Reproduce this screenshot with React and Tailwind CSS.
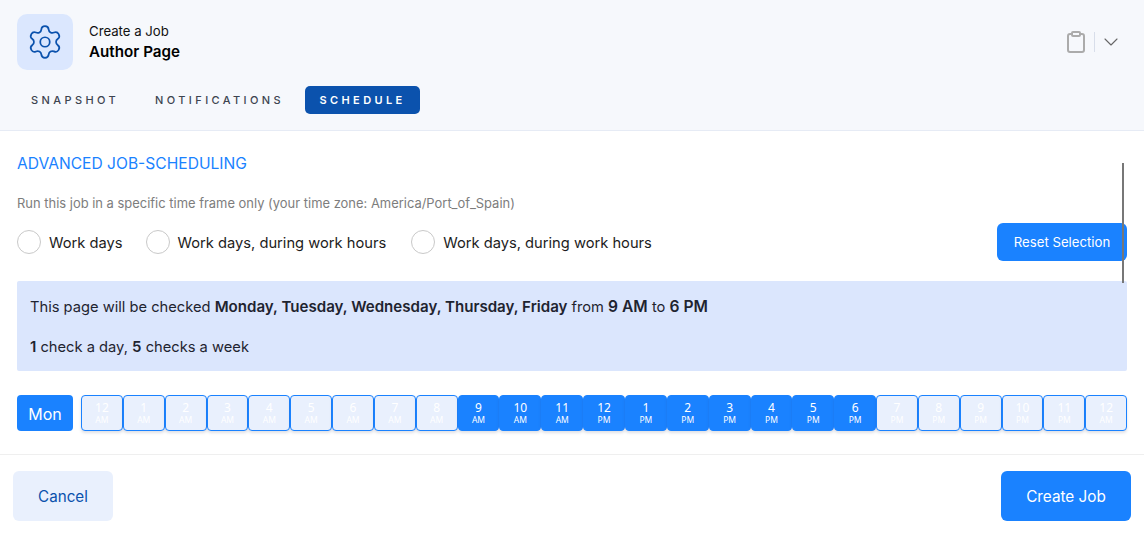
import React from 'react';
import { ChevronDown, Clipboard, Settings } from 'lucide-react';

const horas = [
    ['12', 'AM', false], ['1', 'AM', false], ['2', 'AM', false], ['3', 'AM', false], ['4', 'AM', false],
    ['5', 'AM', false], ['6', 'AM', false], ['7', 'AM', false], ['8', 'AM', false],
    ['9', 'AM', true], ['10', 'AM', true], ['11', 'AM', true], ['12', 'PM', true], ['1', 'PM', true],
    ['2', 'PM', true], ['3', 'PM', true], ['4', 'PM', true], ['5', 'PM', true], ['6', 'PM', true],
    ['7', 'PM', false], ['8', 'PM', false], ['9', 'PM', false], ['10', 'PM', false], ['11', 'PM', false],
    ['12', 'AM', false],
];

const Radio = ({ label, className }) => (
    <label className={`flex items-center gap-[8px] ${className}`}>
        <span className="w-[24px] h-[24px] rounded-full border border-[#c9c9c9] bg-white" />
        <span className="mt-[2px] text-[14.7px] text-[#1c1c1c]">{label}</span>
    </label>
);

const Hora = ({ hora, periodo, ativo }) => (
    <div
        className={`flex-1 h-[36px] flex flex-col items-center justify-center rounded-[4px] border border-[#1a82ff] text-white shadow-[0_2px_3px_rgba(60,70,100,0.16)] ${ativo ? 'bg-[#1a82ff]' : 'bg-[#e9f0fd]'}`}
    >
        <span className="text-[12px] leading-[13px] font-['Noto_Sans',sans-serif]">{hora}</span>
        <span className="text-[8.5px] leading-[11px] font-['Noto_Sans',sans-serif]">{periodo}</span>
    </div>
);

export default function App() {
    return (
        <div className="w-[1144px] h-[534px] overflow-hidden bg-white font-['Inter',sans-serif] flex flex-col">
            <header className="h-[131px] shrink-0 bg-[#f6f8fc] border-b border-[#e6ebf5] pl-[17px] pr-[21px] pt-[14px]">
                <div className="flex items-center">
                    <div className="w-[56px] h-[56px] rounded-[10px] bg-[#dbe7fe] flex items-center justify-center">
                        <Settings size={38} strokeWidth={1.1} className="text-[#0b52ad]" />
                    </div>
                    <div className="ml-[16px] pt-[2px]">
                        <p className="text-[13.2px] leading-[18px] text-[#111]">Create a Job</p>
                        <p className="text-[15.2px] leading-[24px] font-semibold text-black">Author Page</p>
                    </div>
                    <div className="ml-auto flex items-center self-start mt-[16px]">
                        <Clipboard size={24} strokeWidth={2} className="text-[#ababab]" />
                        <span className="ml-[6px] w-[1px] h-[20px] bg-[#d8deea]" />
                        <ChevronDown size={24} strokeWidth={1.1} className="ml-[4px] text-[#666]" />
                    </div>
                </div>
                <nav className="mt-[16px] flex items-center text-[11px] font-medium tracking-[3.4px] text-[#3d4450]">
                    <span className="ml-[14px]">SNAPSHOT</span>
                    <span className="ml-[36px]">NOTIFICATIONS</span>
                    <span className="ml-[21px] h-[28px] w-[115px] rounded-[5px] bg-[#0b52ad] text-white font-semibold flex items-center justify-center">SCHEDULE</span>
                </nav>
            </header>

            <main className="relative flex-1 pl-[17px] pr-[17px] pt-[23px]">
                <span className="absolute left-[1122px] top-[32px] w-[2px] h-[120px] bg-[#777]" />
                <h2 className="text-[15.6px] leading-[20px] text-[#1a82ff]">ADVANCED JOB-SCHEDULING</h2>
                <p className="mt-[20px] text-[12.95px] leading-[18px] text-[#7d7d7d]">
                    Run this job in a specific time frame only (your time zone: America/Port_of_Spain)
                </p>
                <div className="mt-[11px] flex items-center">
                    <Radio label="Work days" />
                    <Radio label="Work days, during work hours" className="ml-[23px]" />
                    <Radio label="Work days, during work hours" className="ml-[25px]" />
                    <button className="ml-auto w-[130px] h-[38px] pt-[2px] rounded-[6px] bg-[#1a82ff] text-white text-[13.2px]">Reset Selection</button>
                </div>
                <div className="mt-[20px] h-[90px] rounded-[2px] bg-[#dbe6fd] px-[13px] pt-[16px] text-[14.7px] text-[#1f2430]">
                    <p className="leading-[20px]">
                        This page will be checked <b className="font-semibold text-[15.1px]">Monday, Tuesday, Wednesday, Thursday, Friday</b> from <b className="font-semibold text-[15.6px]">9 AM</b> to <b className="font-semibold text-[15.6px]">6 PM</b>
                    </p>
                    <p className="mt-[20px] leading-[20px]">
                        <b className="font-semibold text-[15px]">1</b> check a day, <b className="font-semibold text-[15px]">5</b> checks a week
                    </p>
                </div>
                <div className="mt-[24px] flex items-center">
                    <div className="w-[56px] h-[36px] pt-[2px] rounded-[4px] bg-[#1a82ff] text-white text-[16px] flex items-center justify-center">Mon</div>
                    <div className="ml-[8px] flex-1 flex">
                        {horas.map(([hora, periodo, ativo], i) => (
                            <Hora key={i} hora={hora} periodo={periodo} ativo={ativo} />
                        ))}
                    </div>
                </div>
            </main>

            <footer className="h-[80px] shrink-0 border-t border-[#efefef] pl-[13px] pr-[13px] pt-[16px] flex items-start justify-between">
                <button className="w-[100px] h-[50px] pt-[2px] rounded-[6px] bg-[#e9f0fd] text-[#0b52ad] text-[15.2px]">Cancel</button>
                <button className="w-[130px] h-[50px] pt-[2px] rounded-[6px] bg-[#1a82ff] text-white text-[15.3px]">Create Job</button>
            </footer>
        </div>
    );
}
